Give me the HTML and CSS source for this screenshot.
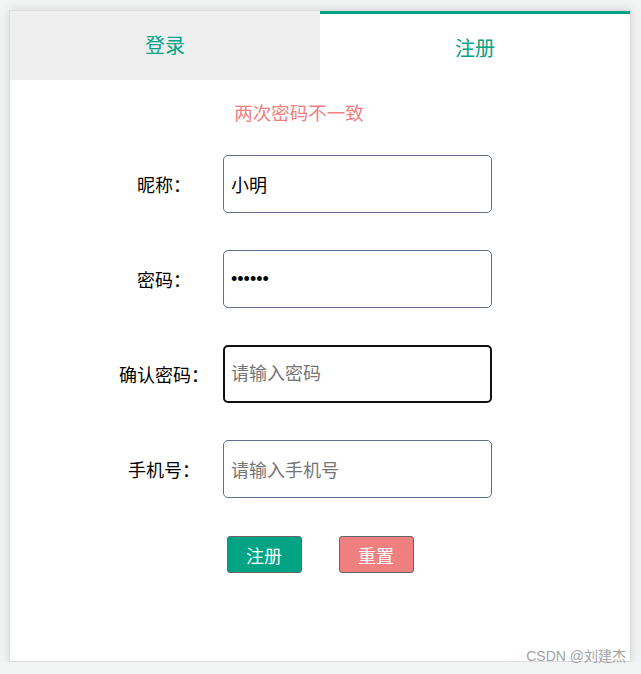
FILE: index.html
```html
<!DOCTYPE html>
<html lang="zh-CN">
<head>
  <meta charset="UTF-8">
  <meta name="viewport" content="width=device-width, initial-scale=1.0">
  <title>注册</title>
  <link rel="stylesheet" href="styles.css">
</head>
<body>
  <div class="card">
    <div class="tabs">
      <div class="tab">登录</div>
      <div class="tab active">注册</div>
    </div>

    <form class="regForm">
      <p class="errorMsg">两次密码不一致</p>

      <div class="row">
        <label for="nickname">昵称：</label>
        <input type="text" id="nickname" name="nickname" value="小明">
      </div>
      <div class="row">
        <label for="password">密码：</label>
        <input type="password" id="password" name="password" value="123456">
      </div>
      <div class="row">
        <label for="password2">确认密码：</label>
        <input type="password" id="password2" name="password2" class="focused" placeholder="请输入密码">
      </div>
      <div class="row last">
        <label for="phone">手机号：</label>
        <input type="text" id="phone" name="phone" placeholder="请输入手机号">
      </div>

      <div class="btnRow">
        <button type="submit" class="btn btnGreen">注册</button>
        <button type="reset" class="btn btnRed">重置</button>
      </div>
    </form>
  </div>

  <div class="watermark">CSDN @刘建杰</div>
</body>
</html>
```

FILE: styles.css
```css
body {
  margin: 0;
  background: #f2f3f3;
  font-family: "Noto Sans CJK SC", "Noto Sans", sans-serif;
}
.card {
  position: relative;
  width: 620px;
  height: 650px;
  margin: 10px 0 0 9px;
  background: #fff;
  border: 1px solid #dcdcdc;
  box-shadow: 0 0 10px rgba(0,0,0,0.12);
}
.tabs {
  display: flex;
}
.tab {
  flex: 1;
  height: 69px;
  line-height: 67px;
  text-align: center;
  font-size: 20px;
  color: #00a383;
  background: #efefef;
}
.tab.active {
  background: #fff;
  border-top: 3px solid #00a383;
  height: 66px;
  line-height: 67px;
}
.regForm {
  margin: 0;
  padding-top: 20px;
}
.errorMsg {
  margin: 0 42px 31px 0;
  line-height: 24px;
  text-align: center;
  font-size: 18.5px;
  color: #f08080;
}
.row {
  display: flex;
  align-items: center;
  padding-left: 99px;
  margin-bottom: 37px;
}
.row.last {
  margin-bottom: 38px;
}
.row label {
  width: 110px;
  margin-right: 4px;
  text-align: center;
  font-size: 18px;
  color: #000;
}
.row input {
  box-sizing: border-box;
  width: 269px;
  height: 58px;
  padding: 0 7px;
  border: 1px solid #5b7090;
  border-radius: 5px;
  font-family: inherit;
  font-size: 18px;
  color: #000;
  outline: none;
}
.row input[type="password"] {
  font-family: "Liberation Sans", "Noto Sans CJK SC", sans-serif;
}
.row input::placeholder {
  color: #757575;
}
.row input.focused {
  border: 2px solid #111;
  padding: 0 6px;
}
.btnRow {
  display: flex;
  justify-content: center;
  gap: 37px;
}
.btn {
  width: 75px;
  height: 37px;
  padding: 0;
  border: 1px solid #666;
  border-radius: 3px;
  font-family: inherit;
  font-size: 18px;
  color: #fff;
}
.btnGreen {
  background: #00a383;
}
.btnRed {
  background: #f08080;
}
.watermark {
  position: absolute;
  right: 15px;
  top: 645px;
  font-family: "Liberation Sans", "Noto Sans CJK SC", sans-serif;
  font-size: 14px;
  color: #a3a3a3;
}
```
